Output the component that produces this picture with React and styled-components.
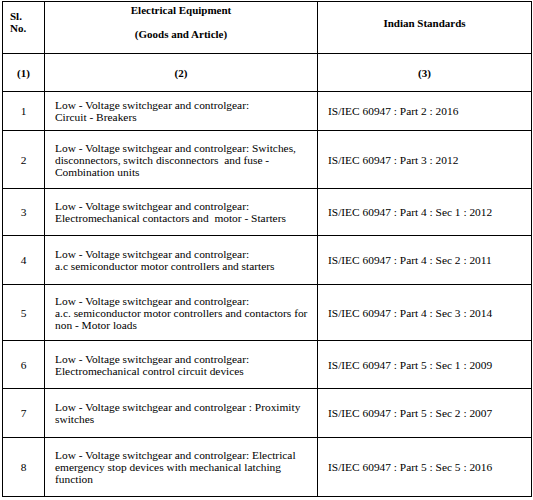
import React from 'react';
import styled, { createGlobalStyle } from 'styled-components';

const GlobalStyle = createGlobalStyle`
  html, body {
    margin: 0;
    padding: 0;
    background: #fff;
  }
  body {
    font-family: "Liberation Serif", "Times New Roman", serif;
    color: #000;
  }
`;

const Page = styled.div`
  padding: 1px 0 0 2px;
`;

const Table = styled.table`
  border-collapse: collapse;
  table-layout: fixed;
  width: 529px;
  font-family: "Liberation Serif", "Times New Roman", serif;
  font-size: 11.4px;
  line-height: 12px;
  color: #000;
`;

const Row = styled.tr`
  height: ${p => p.h}px;
`;

const HeadCell = styled.th`
  border: 1px solid #000;
  font-weight: 700;
  font-size: 11px;
  padding: 0;
  text-align: ${p => p.align || 'center'};
  vertical-align: top;
`;

const HeadText = styled.div`
  padding: ${p => p.pad};
`;

const Cell = styled.td`
  border: 1px solid #000;
  padding: ${p => (p.center ? '0 4px' : '0 2px 0 10px')};
  text-align: ${p => (p.center ? 'center' : 'left')};
  vertical-align: middle;
  font-weight: ${p => (p.bold ? 700 : 400)};
  font-size: ${p => (p.bold ? '11px' : 'inherit')};
  white-space: pre;
`;

const rows = [
  { h: 39, goods: ['Low - Voltage switchgear and controlgear:', 'Circuit - Breakers'], std: 'IS/IEC 60947 : Part 2 : 2016' },
  { h: 58, goods: ['Low - Voltage switchgear and controlgear: Switches,', 'disconnectors, switch disconnectors  and fuse -', 'Combination units'], std: 'IS/IEC 60947 : Part 3 : 2012' },
  { h: 47, goods: ['Low - Voltage switchgear and controlgear:', 'Electromechanical contactors and  motor - Starters'], std: 'IS/IEC 60947 : Part 4 : Sec 1 : 2012' },
  { h: 49, goods: ['Low - Voltage switchgear and controlgear:', 'a.c semiconductor motor controllers and starters'], std: 'IS/IEC 60947 : Part 4 : Sec 2 : 2011' },
  { h: 56, goods: ['Low - Voltage switchgear and controlgear:', 'a.c. semiconductor motor controllers and contactors for', 'non - Motor loads'], std: 'IS/IEC 60947 : Part 4 : Sec 3 : 2014' },
  { h: 48, goods: ['Low - Voltage switchgear and controlgear:', 'Electromechanical control circuit devices'], std: 'IS/IEC 60947 : Part 5 : Sec 1 : 2009' },
  { h: 49, goods: ['Low - Voltage switchgear and controlgear : Proximity', 'switches'], std: 'IS/IEC 60947 : Part 5 : Sec 2 : 2007' },
  { h: 59, goods: ['Low - Voltage switchgear and controlgear: Electrical', 'emergency stop devices with mechanical latching', 'function'], std: 'IS/IEC 60947 : Part 5 : Sec 5 : 2016' },
];

export default function App() {
  return (
    <Page>
      <GlobalStyle />
      <Table>
        <colgroup>
          <col style={{ width: 42 }} />
          <col style={{ width: 273 }} />
          <col style={{ width: 214 }} />
        </colgroup>
        <thead>
          <Row h={52}>
            <HeadCell align="left">
              <HeadText pad="8px 0 0 7px">Sl.<br />No.</HeadText>
            </HeadCell>
            <HeadCell>
              <HeadText pad="2px 0 0">Electrical Equipment<br /><br />(Goods and Article)</HeadText>
            </HeadCell>
            <HeadCell>
              <HeadText pad="15px 0 0">Indian Standards</HeadText>
            </HeadCell>
          </Row>
          <Row h={38}>
            <Cell center bold>(1)</Cell>
            <Cell center bold>(2)</Cell>
            <Cell center bold>(3)</Cell>
          </Row>
        </thead>
        <tbody>
          {rows.map((r, i) => (
            <Row h={r.h} key={i}>
              <Cell center>{i + 1}</Cell>
              <Cell>{r.goods.join('\n')}</Cell>
              <Cell>{r.std}</Cell>
            </Row>
          ))}
        </tbody>
      </Table>
    </Page>
  );
}
